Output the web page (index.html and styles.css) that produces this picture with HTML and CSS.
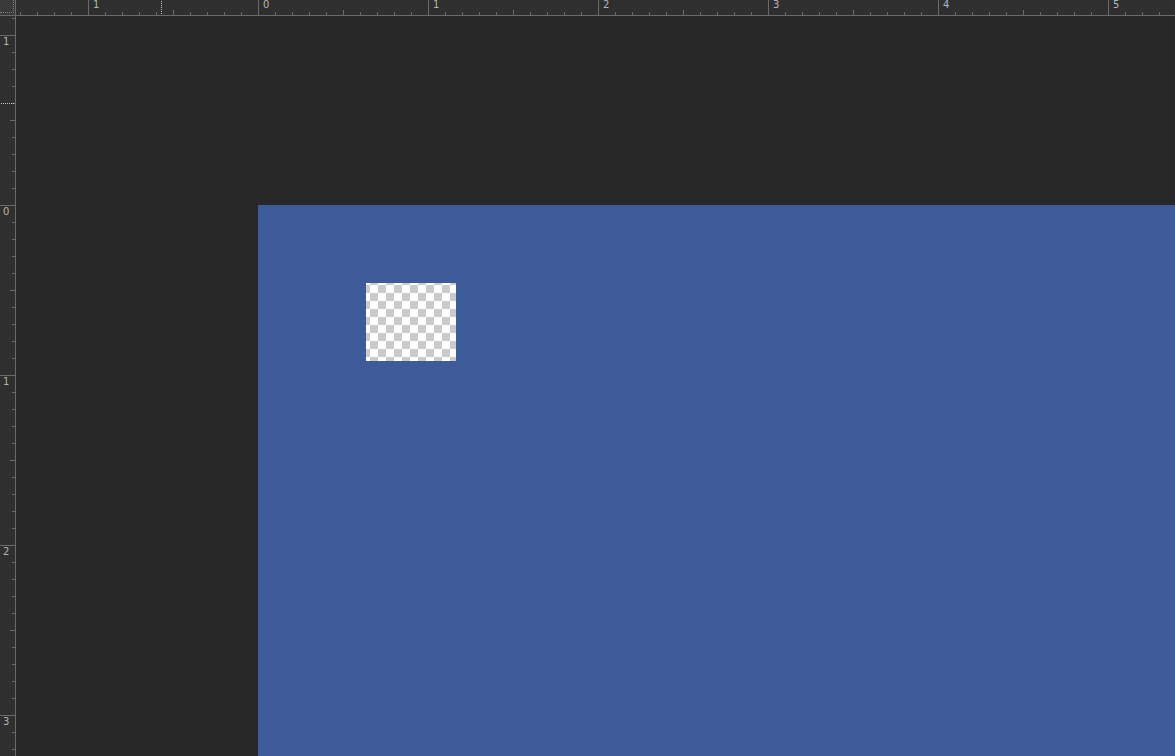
FILE: index.html
```html
<!DOCTYPE html>
<html>
<head>
<meta charset="utf-8">
<link rel="stylesheet" href="styles.css">
</head>
<body>
<div class="app">
  <div class="corner"></div>
  <div class="hruler">
    <div class="hcell"><span>1</span></div>
    <div class="hcell"><span>0</span></div>
    <div class="hcell"><span>1</span></div>
    <div class="hcell"><span>2</span></div>
    <div class="hcell"><span>3</span></div>
    <div class="hcell"><span>4</span></div>
    <div class="hcell"><span>5</span></div>
    <div class="hmark"></div>
  </div>
  <div class="vruler">
    <div class="vcell"><span>1</span></div>
    <div class="vcell"><span>0</span></div>
    <div class="vcell"><span>1</span></div>
    <div class="vcell"><span>2</span></div>
    <div class="vcell"><span>3</span></div>
    <div class="vmark"></div>
  </div>
  <div class="workspace">
    <div class="document">
      <div class="layer"></div>
    </div>
  </div>
</div>
</body>
</html>
```
FILE: styles.css
```css
html, body {
  margin: 0;
  padding: 0;
  background: #282828;
  overflow: hidden;
}
.app {
  width: 1175px;
  height: 756px;
  display: grid;
  grid-template-columns: 16px 1fr;
  grid-template-rows: 16px 1fr;
  font-family: "DejaVu Sans", sans-serif;
  overflow: hidden;
}
.corner {
  background: #3a3a3a;
  border-right: 1px solid #6a6a6a;
  border-bottom: 1px solid #6a6a6a;
  box-sizing: border-box;
  position: relative;
}
.corner::after {
  content: "";
  position: absolute;
  left: 0;
  top: 0;
  width: 13px;
  height: 12px;
  border-right: 1px dotted #808080;
  border-bottom: 1px dotted #808080;
}
.hruler {
  position: relative;
  display: flex;
  box-sizing: border-box;
  padding-left: 72px;
  border-bottom: 1px solid #6a6a6a;
  overflow: hidden;
  background-color: #2f2f2f;
  background-image:
    linear-gradient(to right, #6a6a6a 1px, transparent 1px),
    linear-gradient(to right, #6a6a6a 1px, transparent 1px);
  background-repeat: repeat-x, repeat-x;
  background-size: 170px 5px, 17px 3px;
  background-position: 157px 10px, 4px 12px;
}
.hcell {
  flex: 0 0 170px;
  box-sizing: border-box;
  border-left: 1px solid #6a6a6a;
  height: 15px;
  background: #2f2f2f;
  background-image: linear-gradient(to right, #6a6a6a 1px, transparent 1px), linear-gradient(to right, #6a6a6a 1px, transparent 1px);
  background-size: 17px 3px, 170px 5px;
  background-position: 16px 12px, 84px 10px;
  background-repeat: repeat-x, no-repeat;
}
.hcell span {
  display: block;
  padding-left: 4px;
  font-size: 10px;
  line-height: 9px;
  color: #b0b5bc;
}
.hmark {
  position: absolute;
  left: 145px;
  top: 1px;
  height: 13px;
  border-left: 1px dotted #c8c8c8;
}
.vruler {
  position: relative;
  display: flex;
  flex-direction: column;
  box-sizing: border-box;
  padding-top: 19px;
  border-right: 1px solid #6a6a6a;
  overflow: hidden;
  background-color: #2f2f2f;
  background-image: linear-gradient(to bottom, #6a6a6a 1px, transparent 1px);
  background-size: 3px 17px;
  background-position: 12px 2px;
  background-repeat: repeat-y;
}
.vcell {
  flex: 0 0 170px;
  box-sizing: border-box;
  border-top: 1px solid #6a6a6a;
  background: #2f2f2f;
  background-image: linear-gradient(to bottom, #6a6a6a 1px, transparent 1px), linear-gradient(to bottom, #6a6a6a 1px, transparent 1px);
  background-size: 3px 17px, 5px 170px;
  background-position: 12px 16px, 10px 84px;
  background-repeat: repeat-y, no-repeat;
}
.vcell span {
  display: block;
  padding-left: 3px;
  padding-top: 2px;
  font-size: 10px;
  line-height: 8px;
  color: #b0b5bc;
}
.vmark {
  position: absolute;
  left: 1px;
  top: 87px;
  width: 13px;
  border-top: 1px dotted #c8c8c8;
}
.workspace {
  background: #282828;
  padding-left: 242px;
  padding-top: 189px;
  overflow: hidden;
}
.document {
  background: #3d5a99;
  height: 600px;
  padding-left: 108px;
  padding-top: 78px;
  box-sizing: border-box;
}
.layer {
  width: 90px;
  height: 78px;
  background-image: repeating-conic-gradient(#cccccc 0 25%, #ffffff 0 50%);
  background-size: 16px 16px;
  background-position: 4px 2px;
}
```
